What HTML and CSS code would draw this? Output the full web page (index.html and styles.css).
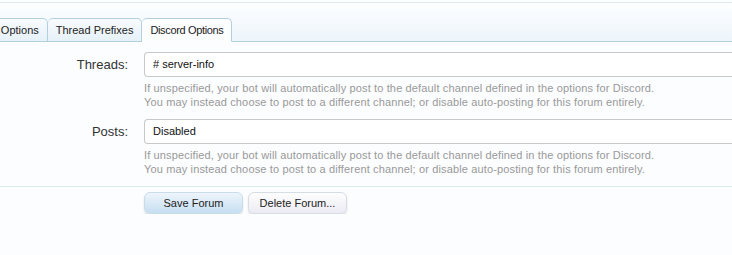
FILE: index.html
```html
<!DOCTYPE html>
<html lang="en">
<head>
  <meta charset="UTF-8" />
  <title>Discord Options</title>
  <link rel="stylesheet" href="styles.css">
</head>
<body>
  <div class="tabs">
    <div class="tab tab-cut">Forum Options</div>
    <div class="tab">Thread Prefixes</div>
    <div class="tab active">Discord Options</div>
  </div>

  <div class="form">
    <div class="row">
      <label class="label">Threads:</label>
      <div class="field">
        <div class="input">#&nbsp;server-info</div>
        <p class="hint">If unspecified, your bot will automatically post to the default channel defined in the options for Discord.<br>You may instead choose to post to a different channel; or disable auto-posting for this forum entirely.</p>
      </div>
    </div>
    <div class="row">
      <label class="label">Posts:</label>
      <div class="field">
        <div class="input">Disabled</div>
        <p class="hint">If unspecified, your bot will automatically post to the default channel defined in the options for Discord.<br>You may instead choose to post to a different channel; or disable auto-posting for this forum entirely.</p>
      </div>
    </div>
  </div>

  <div class="actions">
    <button class="btn primary">Save Forum</button>
    <button class="btn">Delete Forum...</button>
  </div>
</body>
</html>
```

FILE: styles.css
```css
* {
  margin: 0;
  padding: 0;
  box-sizing: border-box;
}
body {
  background: #fcfdff;
  font-family: 'Liberation Sans', Arial, sans-serif;
  color: #222;
  overflow: hidden;
}

.tabs {
  margin-top: 2px;
  height: 40px;
  border-top: 1px solid #dfeaf0;
  border-bottom: 1px solid #b3d0df;
  background: linear-gradient(#fdfeff, #edf5fb);
  display: flex;
  align-items: flex-end;
}
.tab {
  height: 24px;
  margin-bottom: -1px;
  padding: 0 8px;
  border: 1px solid #b3d0df;
  border-radius: 5px 5px 0 0;
  background: linear-gradient(#f8fbfe, #e6f1f9);
  font-size: 11px;
  line-height: 22px;
  color: #222;
  white-space: nowrap;
}
.tab + .tab {
  border-left: none;
}
.tab-cut {
  margin-left: -43px;
}
.tab.active {
  background: #fcfdff;
  border-bottom-color: #fcfdff;
  letter-spacing: -0.35px;
}

.form {
  padding-top: 10px;
}
.row {
  display: grid;
  grid-template-columns: 128px 1fr;
  column-gap: 16px;
  margin-bottom: 10px;
}
.label {
  text-align: right;
  font-size: 13px;
  line-height: 25px;
  color: #333;
}
.input {
  height: 25px;
  border: 1px solid #c8c8c8;
  border-right: none;
  border-radius: 4px 0 0 4px;
  background: #fff;
  font-size: 11px;
  line-height: 23px;
  padding-left: 8px;
  color: #111;
}
.hint {
  margin-top: 4px;
  font-size: 11px;
  line-height: 14px;
  letter-spacing: 0.14px;
  color: #999;
}

.actions {
  border-top: 1px solid #d8ecf2;
  padding: 5px 0 0 144px;
  display: flex;
  gap: 5px;
}
.btn {
  width: 99px;
  height: 22px;
  border: 1px solid #d6dde5;
  border-radius: 6px;
  background: linear-gradient(#fefefe, #ecebf3);
  box-shadow: 0 2px 2px rgba(0, 0, 0, 0.12);
  font-family: inherit;
  font-size: 11px;
  color: #222;
}
.btn.primary {
  border-color: #c9dcea;
  background: linear-gradient(#eef5fb, #c6dff1);
}
```
